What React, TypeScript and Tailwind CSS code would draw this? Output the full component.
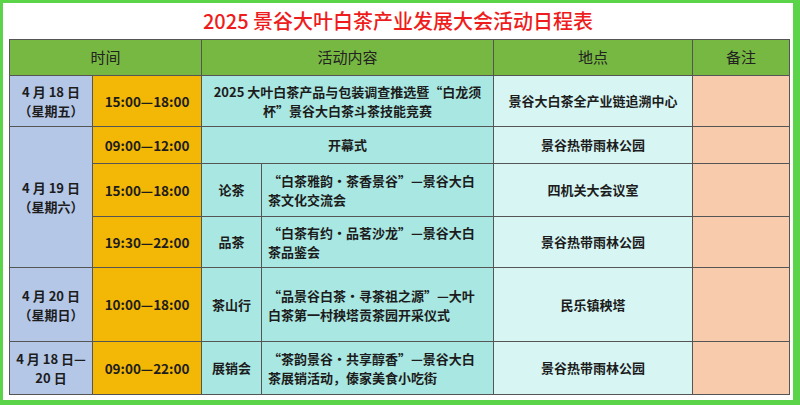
import React from 'react';

const FONT = '"Noto Sans CJK SC", "Noto Sans", sans-serif';

const cell = 'border border-[#555] p-0 align-middle';
const dateBg = 'bg-[#b4c7e7]';
const timeBg = 'bg-[#f3b706]';
const actBg = 'bg-[#a9e8e2]';
const locBg = 'bg-[#d6f5f3]';
const noteBg = 'bg-[#f8cbad]';

function Lines({ lines, align = 'center' }: { lines: string[]; align?: 'center' | 'left' }) {
  return (
    <div className={`leading-[19px] whitespace-nowrap ${align === 'left' ? 'text-left pl-[6px]' : 'text-center'}`}>
      {lines.map((l, i) => (
        <div key={i}>{l}</div>
      ))}
    </div>
  );
}

export default function App() {
  return (
    <div
      className="w-[800px] h-[405px] bg-white border-[#5cd44a] border-l-[3px] border-t-[3px] border-r-[7px] border-b-[5px] flex flex-col"
      style={{ fontFamily: FONT }}
    >
      <div className="h-[36px] flex items-center justify-center text-[20px] text-[#ee1c1c] font-medium">
        2025 景谷大叶白茶产业发展大会活动日程表
      </div>
      <div className="pl-[6px]">
        <table className="border-collapse table-fixed w-[780px] text-[13px] font-bold text-[#1c1c1c]">
          <colgroup>
            <col className="w-[83px]" />
            <col className="w-[109px]" />
            <col className="w-[60px]" />
            <col className="w-[232px]" />
            <col className="w-[199px]" />
            <col className="w-[97px]" />
          </colgroup>
          <thead>
            <tr className="h-[36px] bg-[#77b842] text-[15px] text-[#222]">
              <th colSpan={2} className={`${cell} font-normal`}>时间</th>
              <th colSpan={2} className={`${cell} font-normal`}>活动内容</th>
              <th className={`${cell} font-normal`}>地点</th>
              <th className={`${cell} font-normal`}>备注</th>
            </tr>
          </thead>
          <tbody>
            <tr className="h-[51px]">
              <td className={`${cell} ${dateBg}`}>
                <Lines lines={['4 月 18 日', '（星期五）']} />
              </td>
              <td className={`${cell} ${timeBg} text-center text-[13.5px]`}>15:00—18:00</td>
              <td colSpan={2} className={`${cell} ${actBg}`}>
                <Lines lines={['2025 大叶白茶产品与包装调查推选暨“白龙须', '杯”景谷大白茶斗茶技能竞赛']} />
              </td>
              <td className={`${cell} ${locBg} text-center`}>景谷大白茶全产业链追溯中心</td>
              <td className={`${cell} ${noteBg}`} />
            </tr>
            <tr className="h-[37px]">
              <td rowSpan={3} className={`${cell} ${dateBg}`}>
                <Lines lines={['4 月 19 日', '（星期六）']} />
              </td>
              <td className={`${cell} ${timeBg} text-center text-[13.5px]`}>09:00—12:00</td>
              <td colSpan={2} className={`${cell} ${actBg} text-center`}>开幕式</td>
              <td className={`${cell} ${locBg} text-center`}>景谷热带雨林公园</td>
              <td className={`${cell} ${noteBg}`} />
            </tr>
            <tr className="h-[53px]">
              <td className={`${cell} ${timeBg} text-center text-[13.5px]`}>15:00—18:00</td>
              <td className={`${cell} ${actBg} text-center`}>论茶</td>
              <td className={`${cell} ${actBg}`}>
                <Lines align="left" lines={['“白茶雅韵·茶香景谷”—景谷大白', '茶文化交流会']} />
              </td>
              <td className={`${cell} ${locBg} text-center`}>四机关大会议室</td>
              <td className={`${cell} ${noteBg}`} />
            </tr>
            <tr className="h-[51px]">
              <td className={`${cell} ${timeBg} text-center text-[13.5px]`}>19:30—22:00</td>
              <td className={`${cell} ${actBg} text-center`}>品茶</td>
              <td className={`${cell} ${actBg}`}>
                <Lines align="left" lines={['“白茶有约·品茗沙龙”—景谷大白', '茶品鉴会']} />
              </td>
              <td className={`${cell} ${locBg} text-center`}>景谷热带雨林公园</td>
              <td className={`${cell} ${noteBg}`} />
            </tr>
            <tr className="h-[74px]">
              <td className={`${cell} ${dateBg}`}>
                <Lines lines={['4 月 20 日', '（星期日）']} />
              </td>
              <td className={`${cell} ${timeBg} text-center text-[13.5px]`}>10:00—18:00</td>
              <td className={`${cell} ${actBg} text-center`}>茶山行</td>
              <td className={`${cell} ${actBg}`}>
                <Lines align="left" lines={['“品景谷白茶·寻茶祖之源”—大叶', '白茶第一村秧塔贡茶园开采仪式']} />
              </td>
              <td className={`${cell} ${locBg} text-center`}>民乐镇秧塔</td>
              <td className={`${cell} ${noteBg}`} />
            </tr>
            <tr className="h-[53px]">
              <td className={`${cell} ${dateBg}`}>
                <Lines lines={['4 月 18 日—', '20 日']} />
              </td>
              <td className={`${cell} ${timeBg} text-center text-[13.5px]`}>09:00—22:00</td>
              <td className={`${cell} ${actBg} text-center`}>展销会</td>
              <td className={`${cell} ${actBg}`}>
                <Lines align="left" lines={['“茶韵景谷·共享醇香”—景谷大白', '茶展销活动，傣家美食小吃街']} />
              </td>
              <td className={`${cell} ${locBg} text-center`}>景谷热带雨林公园</td>
              <td className={`${cell} ${noteBg}`} />
            </tr>
          </tbody>
        </table>
      </div>
    </div>
  );
}
